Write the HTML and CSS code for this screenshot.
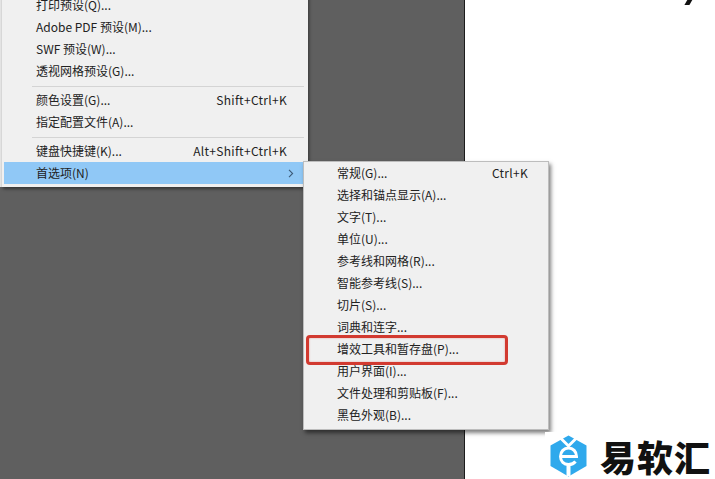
FILE: index.html
```html
<!DOCTYPE html>
<html lang="zh">
<head>
<meta charset="utf-8">
<title>首选项</title>
<link rel="stylesheet" href="styles.css">
</head>
<body>
<div class="stage">
  <div class="workspace"></div>
  <div class="artboard"><span class="ink"></span></div>

  <div class="menu root">
    <div class="row"><span>打印预设(Q)...</span></div>
    <div class="row"><span>Adobe PDF 预设(M)...</span></div>
    <div class="row"><span>SWF 预设(W)...</span></div>
    <div class="row"><span>透视网格预设(G)...</span></div>
    <div class="sep"></div>
    <div class="row"><span>颜色设置(G)...</span><span class="key">Shift+Ctrl+K</span></div>
    <div class="row"><span>指定配置文件(A)...</span></div>
    <div class="sep"></div>
    <div class="row"><span>键盘快捷键(K)...</span><span class="key">Alt+Shift+Ctrl+K</span></div>
    <div class="row active"><span>首选项(N)</span>
      <svg class="chev" width="6" height="9" viewBox="0 0 6 9"><path d="M1 .8 4.6 4.5 1 8.2" fill="none" stroke="#3c5a78" stroke-width="1.1"/></svg>
    </div>
  </div>

  <div class="menu sub">
    <div class="row"><span>常规(G)...</span><span class="key">Ctrl+K</span></div>
    <div class="row"><span>选择和锚点显示(A)...</span></div>
    <div class="row"><span>文字(T)...</span></div>
    <div class="row"><span>单位(U)...</span></div>
    <div class="row"><span>参考线和网格(R)...</span></div>
    <div class="row"><span>智能参考线(S)...</span></div>
    <div class="row"><span>切片(S)...</span></div>
    <div class="row"><span>词典和连字...</span></div>
    <div class="row"><span>增效工具和暂存盘(P)...</span></div>
    <div class="row"><span>用户界面(I)...</span></div>
    <div class="row"><span>文件处理和剪贴板(F)...</span></div>
    <div class="row"><span>黑色外观(B)...</span></div>
    <div class="mark"></div>
  </div>

  <div class="brand">
    <svg class="logo" width="37" height="42" viewBox="0 0 37 42">
      <path d="M18.500 .5 36.500 10.500V31L18.500 41.500 .5 31V10.500Z" fill="#2fa9ec"/>
      <path d="M10 2.500 18.500 11 27 2.500" fill="none" stroke="#fff" stroke-width="3"/>
      <path d="M10.500 21.500H26.500C26.500 16.500 23 13 18.500 13S10.500 16.500 10.500 21.500 14 29.500 18.500 29.500C21.500 29.500 24 28.500 25.500 26.500" fill="none" stroke="#fff" stroke-width="3"/>
      <path d="M18.500 29V41" stroke="#fff" stroke-width="4"/>
    </svg>
    <span class="brand-name">易软汇</span>
  </div>
</div>
</body>
</html>
```
FILE: styles.css
```css
html, body {
  margin: 0;
  padding: 0;
  background: #fff;
}
.stage {
  position: relative;
  display: flex;
  width: 715px;
  height: 479px;
  overflow: hidden;
  font-family: "Noto Sans CJK SC", "Open Sans", sans-serif;
  font-size: 12px;
  color: #222;
}
.workspace {
  width: 464px;
  flex: none;
  background: #5f5f5f;
  border-right: 1px solid #1c1c1c;
}
.artboard {
  flex: 1;
  position: relative;
  background: #fff;
}
.ink {
  position: absolute;
  left: 222px;
  top: -4px;
  width: 5px;
  height: 9px;
  background: #111;
  transform: skewX(-30deg);
}
.menu {
  position: absolute;
  box-sizing: border-box;
  background: #f0f0f0;
  display: flex;
  flex-direction: column;
}
.root {
  left: 2px;
  top: -6px;
  width: 306px;
  height: 193px;
  padding: 0 2px 2px 2px;
  box-shadow: 1px 2px 3px rgba(0, 0, 0, .45), -2px 0 0 #e9e9e9;
}
.sub {
  left: 303px;
  top: 161px;
  width: 246px;
  height: 269px;
  border: 1px solid #bdbdbd;
  box-shadow: 2px 3px 4px rgba(0, 0, 0, .5);
}
.row {
  flex: none;
  height: 22px;
  padding: 0 20px 0 32px;
  display: flex;
  align-items: center;
  justify-content: space-between;
  white-space: nowrap;
  line-height: 22px;
}
.root .row {
  padding-right: 19px;
}
.sub .row {
  padding-left: 33px;
}
.sep {
  flex: none;
  height: 1px;
  margin: 4px 2px 2px 28px;
  background: #d4d4d4;
}
.key {
  letter-spacing: .3px;
}
.active {
  background: #90c8f6;
  position: relative;
}
.chev {
  position: absolute;
  right: 12px;
  top: 7px;
}
.mark {
  position: absolute;
  left: 2px;
  top: 173px;
  width: 196px;
  height: 24px;
  border: 3px solid #d23a30;
  border-radius: 4px;
  box-shadow: inset 0 0 2px rgba(214, 50, 44, .45);
}
.brand {
  position: absolute;
  left: 545px;
  top: 432px;
  width: 170px;
  height: 47px;
  background: #fff;
  display: flex;
  align-items: center;
  gap: 13px;
  padding-left: 5px;
  box-sizing: border-box;
}
.logo {
  flex: none;
}
.brand-name {
  font-size: 36px;
  font-weight: 900;
  line-height: 40px;
  color: #111;
  letter-spacing: 1px;
}
```
